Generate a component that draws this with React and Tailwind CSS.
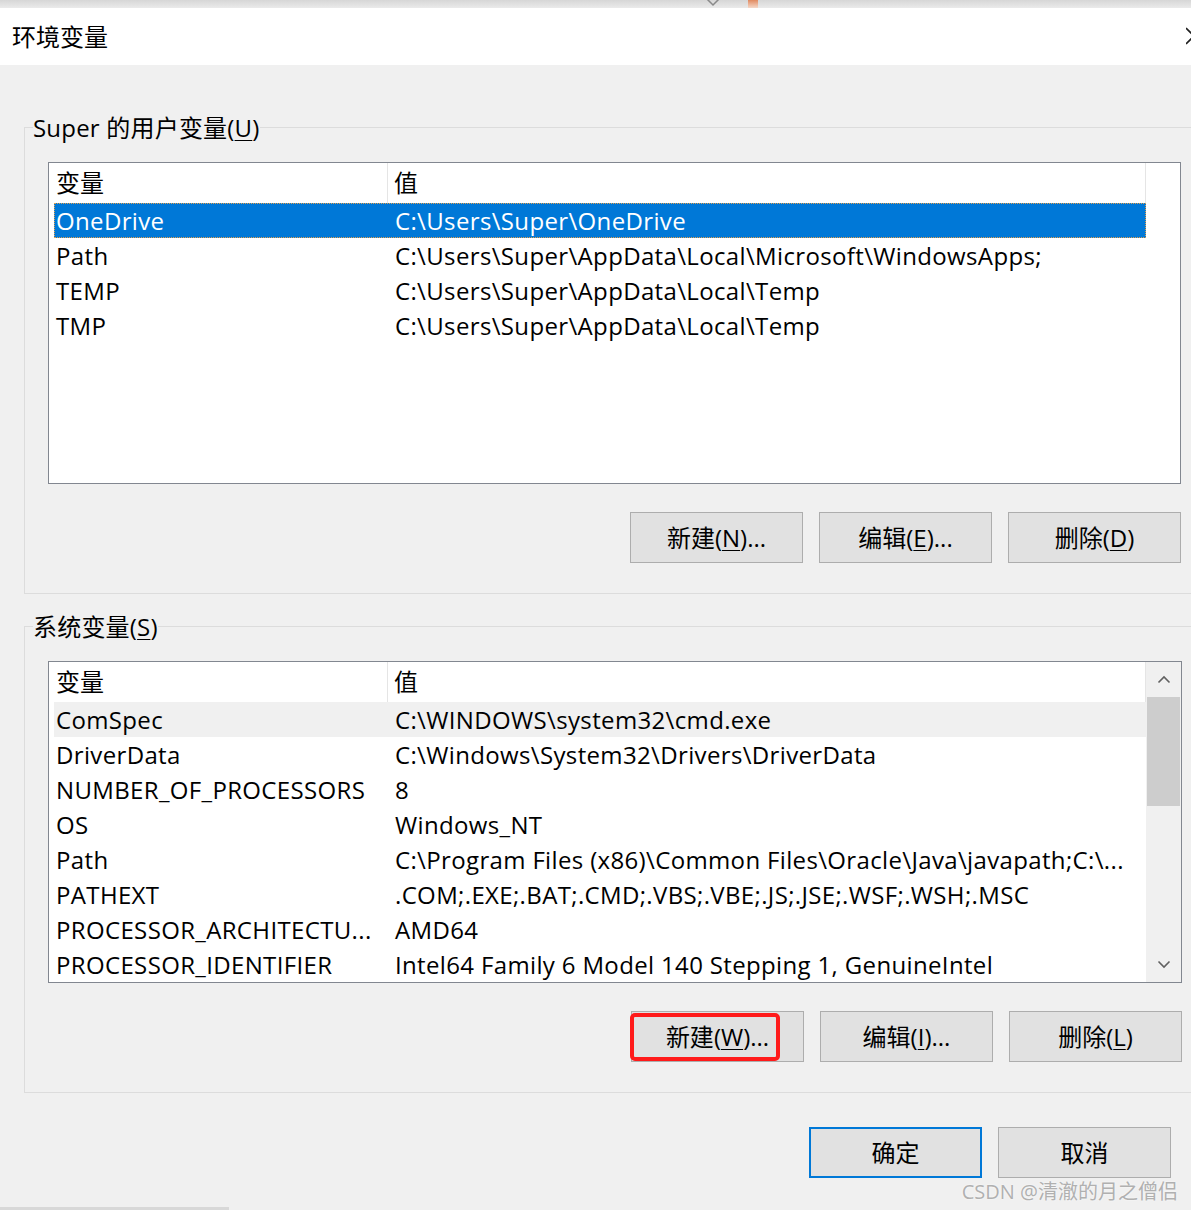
import React from "react";

const FONT = {
  fontFamily:
    '"Segoe UI", "Open Sans", "Noto Sans CJK SC", sans-serif',
};

// =========================
// DATA
// =========================
const userVars = [
  ["OneDrive", "C:\\Users\\Super\\OneDrive"],
  ["Path", "C:\\Users\\Super\\AppData\\Local\\Microsoft\\WindowsApps;"],
  ["TEMP", "C:\\Users\\Super\\AppData\\Local\\Temp"],
  ["TMP", "C:\\Users\\Super\\AppData\\Local\\Temp"],
];

const sysVars = [
  ["ComSpec", "C:\\WINDOWS\\system32\\cmd.exe"],
  ["DriverData", "C:\\Windows\\System32\\Drivers\\DriverData"],
  ["NUMBER_OF_PROCESSORS", "8"],
  ["OS", "Windows_NT"],
  ["Path", "C:\\Program Files (x86)\\Common Files\\Oracle\\Java\\javapath;C:\\..."],
  ["PATHEXT", ".COM;.EXE;.BAT;.CMD;.VBS;.VBE;.JS;.JSE;.WSF;.WSH;.MSC"],
  ["PROCESSOR_ARCHITECTU...", "AMD64"],
  ["PROCESSOR_IDENTIFIER", "Intel64 Family 6 Model 140 Stepping 1, GenuineIntel"],
];

const Chevron = ({ up }) => (
  <svg width="14" height="9" viewBox="0 0 14 9">
    <path
      d={up ? "M1.5 7.5 L7 2 L12.5 7.5" : "M1.5 1.5 L7 7 L12.5 1.5"}
      fill="none"
      stroke="#606060"
      strokeWidth="1.6"
    />
  </svg>
);

// =========================
// LIST VIEW
// =========================
const ListView = ({ rows, selected, hover, scrollbar }) => (
  <div className="flex h-[322px] border border-[#828790] bg-white overflow-hidden">
    <div className="w-[1097px] flex flex-col">
      {/* HEADER */}
      <div className="flex h-[40px] shrink-0">
        <div className="w-[339px] pl-[7px] flex items-center border-r border-[#e5e5e5]">
          变量
        </div>
        <div className="flex-1 pl-[6px] flex items-center border-r border-[#e5e5e5]">
          值
        </div>
      </div>

      {/* ROWS */}
      {rows.map((r, i) => (
        <div
          key={i}
          className={`ml-[5px] flex h-[35px] shrink-0 items-center whitespace-nowrap tracking-[0.35px] ${
            i === selected
              ? "bg-[#0078d7] text-white outline-1 outline-dotted outline-[#e0a050] -outline-offset-1"
              : i === hover
              ? "bg-[#f0f0f0]"
              : ""
          }`}
        >
          <div className="w-[334px] pl-[2px]">{r[0]}</div>
          <div className="flex-1 pl-[7px]">{r[1]}</div>
        </div>
      ))}
    </div>

    {scrollbar ? (
      <div className="w-[35px] bg-[#f0f0f0] flex flex-col px-[1px]">
        <div className="h-[35px] flex items-center justify-center">
          <Chevron up />
        </div>
        <div className="h-[109px] bg-[#cdcdcd]"></div>
        <div className="flex-1"></div>
        <div className="h-[35px] flex items-center justify-center">
          <Chevron />
        </div>
      </div>
    ) : (
      <div className="flex-1"></div>
    )}
  </div>
);

const Btn = ({ label, hot, tail, className = "", children }) => (
  <button
    className={`relative w-[173px] h-[51px] bg-[#e1e1e1] border border-[#adadad] flex items-center justify-center ${className}`}
  >
    <span>
      {label}(<span className="underline underline-offset-[3px] decoration-1">{hot}</span>){tail}
    </span>
    {children}
  </button>
);

const Group = ({ title, hot, rows, selected, hover, scrollbar, buttons, className = "" }) => (
  <fieldset
    className={`ml-[24px] mr-[-20px] pl-[8px] pr-[29px] pb-[30px] border border-[#dcdcdc] ${className}`}
  >
    <legend className="h-[34px] leading-[36px] px-0 tracking-[0.2px]">
      {title}(<span className="underline underline-offset-[3px] decoration-1">{hot}</span>)
    </legend>

    <div className="pl-[15px] pt-[18px]">
      <ListView
        rows={rows}
        selected={selected}
        hover={hover}
        scrollbar={scrollbar}
      />

      <div className="flex justify-end gap-[16px] mt-[28px]">{buttons}</div>
    </div>
  </fieldset>
);

export default function App() {
  return (
    <div
      className="relative w-[1191px] h-[1210px] bg-[#f0f0f0] overflow-hidden text-[24px] text-black flex flex-col"
      style={FONT}
    >
      {/* TOP STRIP */}
      <div className="h-[8px] shrink-0 bg-gradient-to-b from-[#d6d6d6] to-[#eaeaea] flex">
        <div className="ml-[704px] -mt-[3px]">
          <svg width="18" height="10" viewBox="0 0 18 10">
            <path d="M2 1 L9 8 L16 1" fill="none" stroke="#8a8a8a" strokeWidth="1.5" />
          </svg>
        </div>
        <div className="ml-[26px] w-[10px] h-[8px] bg-gradient-to-b from-[#e08a60] to-[#f4d8c8]"></div>
      </div>

      {/* TITLE BAR */}
      <div className="h-[57px] shrink-0 bg-white flex items-center justify-between pl-[12px]">
        <span>环境变量</span>
        {/* close icon, clipped at the edge */}
        <svg width="5" height="20" viewBox="0 0 5 20" className="mt-[-2px]">
          <path d="M0 2 L8 10 L0 18" fill="none" stroke="#202020" strokeWidth="1.6" />
        </svg>
      </div>

      {/* USER VARS */}
      <Group
        className="mt-[45px]"
        title="Super 的用户变量"
        hot="U"
        rows={userVars}
        selected={0}
        buttons={[
          <Btn key="n" label="新建" hot="N" tail="..." />,
          <Btn key="e" label="编辑" hot="E" tail="..." />,
          <Btn key="d" label="删除" hot="D" />,
        ]}
      />

      {/* SYSTEM VARS */}
      <Group
        className="mt-[15px]"
        title="系统变量"
        hot="S"
        rows={sysVars}
        hover={0}
        scrollbar
        buttons={[
          <Btn key="n" label="新建" hot="W" tail="...">
            <div className="absolute left-[-2px] top-[1px] w-[150px] h-[48px] border-4 border-[#ff1a1a] rounded-[5px]"></div>
          </Btn>,
          <Btn key="e" label="编辑" hot="I" tail="..." />,
          <Btn key="d" label="删除" hot="L" />,
        ]}
      />

      {/* OK / CANCEL */}
      <div className="flex justify-end gap-[16px] mt-[34px] pr-[20px]">
        <button className="w-[173px] h-[51px] bg-[#e1e1e1] border-2 border-[#0078d7]">
          确定
        </button>
        <button className="w-[173px] h-[51px] bg-[#e1e1e1] border border-[#adadad]">
          取消
        </button>
      </div>

      <div className="flex-1"></div>
      <div className="h-[3px] w-[229px] bg-[#d8d8d8] shrink-0"></div>

      {/* WATERMARK */}
      <div
        className="absolute right-[13px] bottom-[3px] text-[20px] text-[#b0b0b0]"
        style={{ textShadow: "0 0 2px #ffffff" }}
      >
        CSDN @清澈的月之僧侣
      </div>
    </div>
  );
}
